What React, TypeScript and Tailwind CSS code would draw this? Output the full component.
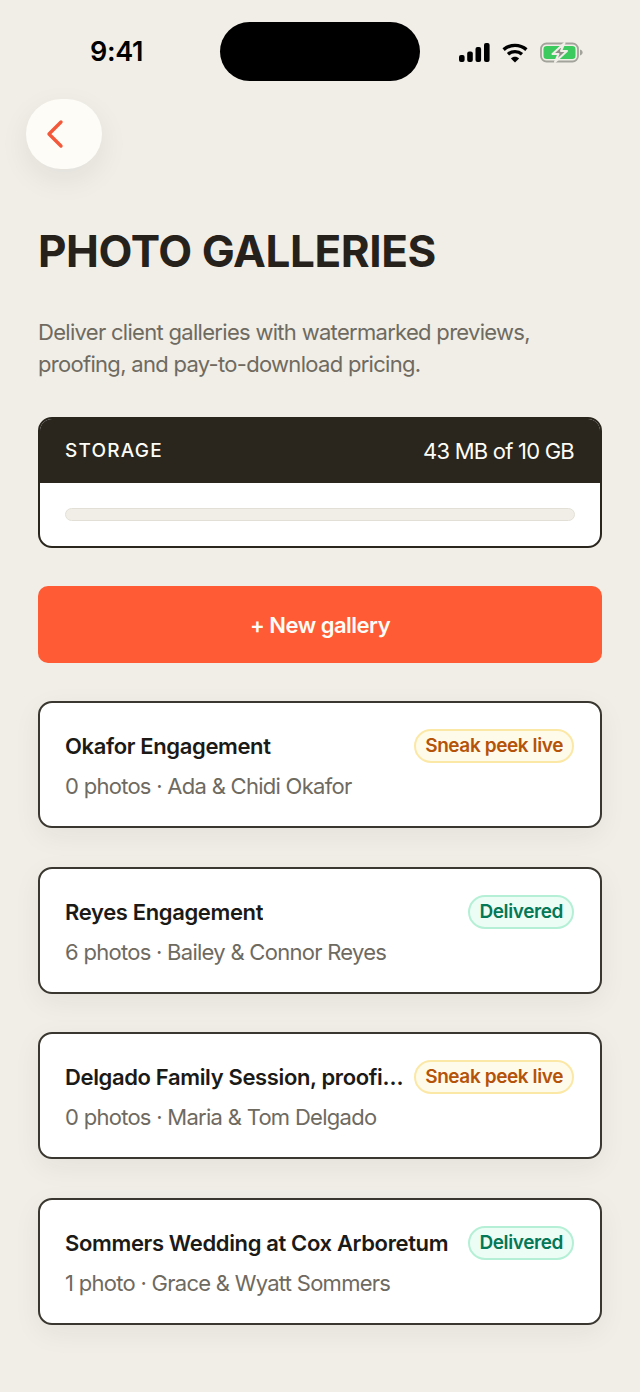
import React from "react";

function Signal() {
  return (
    <svg width="31" height="19" viewBox="0 0 31 19" fill="#000">
      <rect x="0" y="12" width="5.600" height="7" rx="2" />
      <rect x="8.200" y="8.500" width="5.600" height="10.500" rx="2" />
      <rect x="16.500" y="4" width="5.600" height="15" rx="2" />
      <rect x="25" y="0" width="5.600" height="19" rx="2" />
    </svg>
  );
}

function Wifi() {
  return (
    <svg width="26" height="20" viewBox="0 0 26 20" fill="none" stroke="#000" strokeWidth="3.400">
      <path d="M1.600 6.600C8 1 18 1 24.400 6.600" />
      <path d="M6 11.200C10 7.800 16 7.800 20 11.200" />
      <path d="M13 19.500L8.900 15.400C11 13.300 15 13.300 17.100 15.400Z" fill="#000" stroke="none" />
    </svg>
  );
}

function Battery() {
  return (
    <svg width="44" height="21" viewBox="0 0 44 21" fill="none">
      <rect x="1" y="1.500" width="37" height="18" rx="5.500" stroke="#a3a39b" strokeWidth="1.800" />
      <rect x="3.500" y="4" width="32" height="13" rx="3.200" fill="#3cc95e" />
      <path d="M40 7.500v6c1.600-.4 2.600-1.600 2.600-3s-1-2.600-2.600-3Z" fill="#a3a39b" />
      <path d="M24.500 1L12.500 12H18.500L15 20L27 9H21Z" fill="#8f8f88" stroke="#f0eee7" strokeWidth="2" strokeLinejoin="round" />
    </svg>
  );
}

function GalleryCard({ title, meta, status }: { title: string; meta: string; status: "sneak" | "delivered" }) {
  return (
    <div className="flex h-[127px] flex-col justify-center gap-[9px] rounded-[14px] border-2 border-[#3a3730] bg-white pr-[26px] pl-[25px] shadow-[0_8px_28px_rgba(40,35,25,0.06)]">
      <div className="flex items-center justify-between gap-[10px]">
        <span className="min-w-0 truncate text-[22px] leading-[28px] font-semibold tracking-[-0.36px] text-[#1c1a16]">{title}</span>
        {status === "sneak" ? (
          <span className="shrink-0 rounded-full border-2 border-[#fce8a6] bg-[#fffbeb] px-[9px] text-[19px] leading-[30px] font-semibold tracking-[-0.4px] text-[#b45309]">Sneak peek live</span>
        ) : (
          <span className="shrink-0 rounded-full border-2 border-[#b5f0d6] bg-[#ecfdf5] px-[9px] text-[19px] leading-[30px] font-semibold tracking-[-0.4px] text-[#047857]">Delivered</span>
        )}
      </div>
      <div className="text-[22px] leading-[28px] tracking-[-0.72px] text-[#6f6a5f]">{meta}</div>
    </div>
  );
}

export default function App() {
  return (
    <div className="h-[1392px] w-[640px] overflow-hidden bg-[#f0eee7] font-['Inter',sans-serif]">
      <div className="relative flex h-[99px] items-start">
        <span className="mt-[35px] ml-[90px] text-[27px] leading-[34px] font-semibold tracking-[-0.3px] text-black">9:41</span>
        <div className="absolute top-[22px] left-[220px] h-[59px] w-[200px] rounded-full bg-black" />
        <div className="absolute top-[42px] left-[459px] flex items-center gap-[12px]">
          <Signal />
          <Wifi />
          <Battery />
        </div>
      </div>
      <div className="ml-[26px] flex h-[70px] w-[76px] items-center justify-center rounded-full bg-[#fdfcf6] pr-[19px] shadow-[0_10px_30px_rgba(40,35,25,0.07)]">
        <svg width="20" height="30" viewBox="0 0 20 30" fill="none" stroke="#f4583a" strokeWidth="3.400" strokeLinecap="round" strokeLinejoin="round">
          <path d="M16 3L4 15L16 27" />
        </svg>
      </div>
      <div className="px-[38px]">
        <h1 className="mt-[54px] text-[44px] leading-[56px] font-bold tracking-[-0.4px] text-[#26221b]">PHOTO GALLERIES</h1>
        <p className="mt-[37px] text-[22px] leading-[32px] tracking-[-0.7px] text-[#6f6a5f]">
          Deliver client galleries with watermarked previews,
          <br />
          proofing, and pay-to-download pricing.
        </p>
        <div className="mt-[37px] overflow-hidden rounded-[14px] border-2 border-[#2a261e] bg-white">
          <div className="flex h-[64px] items-center justify-between bg-[#2a261e] pr-[26px] pl-[25px] text-[#fdfcf6]">
            <span className="text-[19px] font-medium tracking-[1.2px]">STORAGE</span>
            <span className="text-[22px] tracking-[-0.77px]">43 MB of 10 GB</span>
          </div>
          <div className="px-[25px] pt-[25px] pb-[25px]">
            <div className="h-[13px] rounded-full border border-[#e2e0d6] bg-[#f0eee7]" />
          </div>
        </div>
        <button className="mt-[38px] flex h-[77px] w-full items-center justify-center rounded-[10px] bg-[#ff5c35] pt-[1px] text-[22px] font-semibold tracking-[-0.5px] text-[#fdfcf6]">+ New gallery</button>
        <div className="mt-[38px] flex flex-col gap-[38.500px]">
          <GalleryCard title="Okafor Engagement" meta="0 photos · Ada & Chidi Okafor" status="sneak" />
          <GalleryCard title="Reyes Engagement" meta="6 photos · Bailey & Connor Reyes" status="delivered" />
          <GalleryCard title="Delgado Family Session, proofing round" meta="0 photos · Maria & Tom Delgado" status="sneak" />
          <GalleryCard title="Sommers Wedding at Cox Arboretum" meta="1 photo · Grace & Wyatt Sommers" status="delivered" />
        </div>
      </div>
    </div>
  );
}
